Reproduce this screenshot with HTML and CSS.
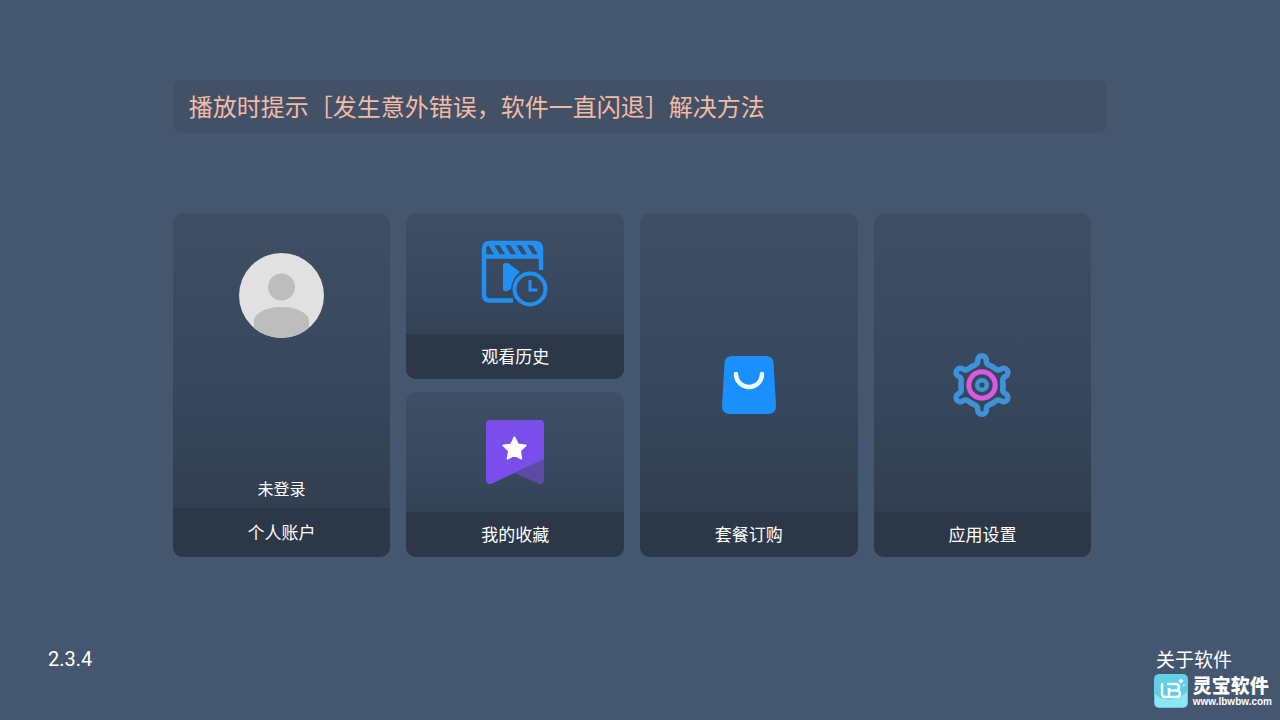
FILE: index.html
```html
<!DOCTYPE html>
<html lang="zh-CN">
<head>
    <meta charset="UTF-8">
    <meta name="viewport" content="width=device-width, initial-scale=1.0">
    <title>个人中心</title>
    <link rel="stylesheet" href="styles.css">
</head>
<body>
    <main class="main">
        <a class="notice" href="#">播放时提示［发生意外错误，软件一直闪退］解决方法</a>

        <div class="cards">
            <button class="card account" type="button">
                <span class="card-body">
                    <svg class="avatar" viewBox="0 0 85 85" aria-hidden="true">
                        <defs>
                            <clipPath id="avatar-clip"><circle cx="42.5" cy="42.5" r="42.5"/></clipPath>
                        </defs>
                        <g clip-path="url(#avatar-clip)">
                            <rect width="85" height="85" fill="#e1e1e1"/>
                            <circle cx="42.5" cy="34" r="13.5" fill="#bdbdbd"/>
                            <path d="M15 85V68C15 60 28 54 42.5 54S70 60 70 68V85Z" fill="#bdbdbd"/>
                        </g>
                    </svg>
                    <span class="status">未登录</span>
                </span>
                <span class="label">个人账户</span>
            </button>

            <div class="stack">
                <button class="card" type="button">
                    <span class="card-body">
                        <svg width="68" height="68" viewBox="0 0 68 68" fill="none" stroke="#2190f5" stroke-width="4.5" aria-hidden="true">
                            <path d="M32 61.500H9Q3 61.500 3 55.500V10Q3 4 9 4H54Q60 4 60 10V31"/>
                            <path d="M3 17.500H60"/>
                            <path d="M9 4l8 13M20 4l8 13M31 4l8 13M42 4l8 13M53 4l7 12" stroke-width="5"/>
                            <path d="M22 26Q22 24 24 24H27L39 33Q31 39 30 50L26 52Q22 53 22 49Z" fill="#2190f5" stroke="none"/>
                            <circle cx="49" cy="50" r="15.500" stroke-width="4"/>
                            <path d="M49 41V51H56.500" stroke-width="3"/>
                        </svg>
                    </span>
                    <span class="label">观看历史</span>
                </button>
                <button class="card" type="button">
                    <span class="card-body">
                        <svg width="60" height="66" viewBox="0 0 60 66" aria-hidden="true">
                            <path d="M30 54L59 39V60Q59 67 53 64.500Z" fill="#5c4aa6"/>
                            <path d="M5 1H55Q59 1 59 5V40L7 64.500Q1 67 1 60V5Q1 1 5 1Z" fill="#7a4eeb"/>
                            <path d="M29.500 18.500L32.800 25.500L40.500 26.500L34.900 31.800L36.300 39.500L29.500 35.800L22.700 39.500L24.100 31.800L18.500 26.500L26.200 25.500Z" fill="#fff" stroke="#fff" stroke-width="2" stroke-linejoin="round"/>
                        </svg>
                    </span>
                    <span class="label">我的收藏</span>
                </button>
            </div>

            <button class="card tall" type="button">
                <span class="card-body">
                    <svg width="54" height="58" viewBox="0 0 54 58" aria-hidden="true">
                        <path d="M10 0H44Q51 0 51.500 7L54 50Q54 58 46 58H8Q0 58 0 50L2.500 7Q3 0 10 0Z" fill="#1a90ff"/>
                        <path d="M14 18A13 13 0 0 0 40 18" fill="none" stroke="#f2fdff" stroke-width="4.500" stroke-linecap="round"/>
                    </svg>
                </span>
                <span class="label">套餐订购</span>
            </button>

            <button class="card tall" type="button">
                <span class="card-body">
                    <svg width="60" height="66" viewBox="-30 -33 60 66" fill="none" aria-hidden="true">
                        <defs>
                            <path id="tooth" d="M-10.500 -18.200L-6 -20.500Q-4.300 -21.500 -4.300 -24V-25A4.300 4.300 0 0 1 4.300 -25V-24Q4.300 -21.500 6 -20.500L10.500 -18.200"/>
                        </defs>
                        <g stroke="#3f92d8" stroke-width="5.500" stroke-linecap="round">
                            <use href="#tooth"/>
                            <use href="#tooth" transform="rotate(60)"/>
                            <use href="#tooth" transform="rotate(120)"/>
                            <use href="#tooth" transform="rotate(180)"/>
                            <use href="#tooth" transform="rotate(240)"/>
                            <use href="#tooth" transform="rotate(300)"/>
                        </g>
                        <circle r="13.200" stroke="#dc58e4" stroke-width="5"/>
                        <circle r="4.800" stroke="#3f92d8" stroke-width="4.500"/>
                    </svg>
                </span>
                <span class="label">应用设置</span>
            </button>
        </div>
    </main>

    <footer class="footer">
        <span class="version">2.3.4</span>
        <a class="about" href="#">关于软件</a>
    </footer>

    <div class="watermark">
        <svg width="34" height="34" viewBox="0 0 34 34" fill="none" aria-hidden="true">
            <defs>
                <linearGradient id="logo-bg" x1="0" y1="0" x2="0" y2="1">
                    <stop offset="0" stop-color="#62d2e8"/>
                    <stop offset="1" stop-color="#5fc8e2"/>
                </linearGradient>
            </defs>
            <rect width="34" height="34" rx="5" fill="url(#logo-bg)"/>
            <path d="M1 20Q15 32 33 18V29Q33 33 29 33H5Q1 33 1 29Z" fill="#8be7f1"/>
            <path d="M8 9V20Q8 23 11 23H22Q26 23 26 19.500Q26 16.500 22 16.500H16M13 10H21Q25 10 25 13Q25 16.500 21 16.500M15 14V23" stroke="#f3feff" stroke-width="2.500"/>
            <path d="M27 4l1 2 2 1-2 1-1 2-1-2-2-1 2-1ZM30 10l1 1-1 1-1-1Z" fill="#f3feff"/>
        </svg>
        <div class="watermark-text">
            <span class="watermark-name">灵宝软件</span>
            <span class="watermark-url">www.lbwbw.com</span>
        </div>
    </div>
</body>
</html>
```
FILE: styles.css
```css
* {
    box-sizing: border-box;
}
body {
    margin: 0;
    min-height: 100vh;
    display: flex;
    flex-direction: column;
    background-color: #45576f;
    color: #fff;
    font-family: Roboto, "Noto Sans CJK SC", sans-serif;
}
a {
    color: inherit;
    text-decoration: none;
}
.main {
    padding: 80px 13.5% 0;
}
.notice {
    display: block;
    padding: 8px 16px 9px;
    border-radius: 8px;
    background-color: #425166;
    color: #f3bba6;
    font-family: "Noto Sans CJK SC", sans-serif;
    font-size: 24px;
    line-height: 36px;
}
.cards {
    display: grid;
    grid-template-columns: repeat(4, 1fr);
    gap: 16px;
    min-height: 344px;
    margin: 80px 16px 0 0;
}
.stack {
    display: grid;
    grid-template-rows: 1fr 1fr;
    gap: 13px;
}
.card {
    display: flex;
    flex-direction: column;
    padding: 0;
    border: none;
    border-radius: 10px;
    overflow: hidden;
    background: linear-gradient(#3f4e63, #37475d 50%, #303c4b);
    color: #fff;
    font-family: "Noto Sans CJK SC", sans-serif;
    cursor: pointer;
}
.card-body {
    flex: 1;
    width: 100%;
    display: flex;
    flex-direction: column;
    align-items: center;
    justify-content: center;
}
.tall .card-body {
    padding-top: 45px;
}
.account .card-body {
    justify-content: space-between;
    padding: 40px 0 8px;
}
.avatar {
    width: 85px;
    height: 85px;
}
.status {
    font-size: 16px;
    line-height: 24px;
}
.label {
    width: 100%;
    padding-bottom: 2px;
    background-color: #2c3847;
    font-size: 17px;
    line-height: 43px;
}
.account .label {
    line-height: 47px;
}
.footer {
    display: flex;
    justify-content: space-between;
    align-items: center;
    margin-top: auto;
    padding: 0 48px 46px;
    line-height: 30px;
}
.version {
    font-size: 20px;
}
.about {
    font-family: "Noto Sans CJK SC", sans-serif;
    font-size: 19px;
}
.watermark {
    position: absolute;
    right: 8px;
    bottom: 12px;
    display: flex;
    align-items: center;
    gap: 5px;
}
.watermark-text {
    display: flex;
    flex-direction: column;
}
.watermark-name {
    font-family: "Noto Sans CJK SC", sans-serif;
    font-size: 19px;
    font-weight: 900;
    line-height: 22px;
}
.watermark-url {
    font-family: "Liberation Sans", sans-serif;
    font-size: 10px;
    font-weight: bold;
    line-height: 12px;
}
```
